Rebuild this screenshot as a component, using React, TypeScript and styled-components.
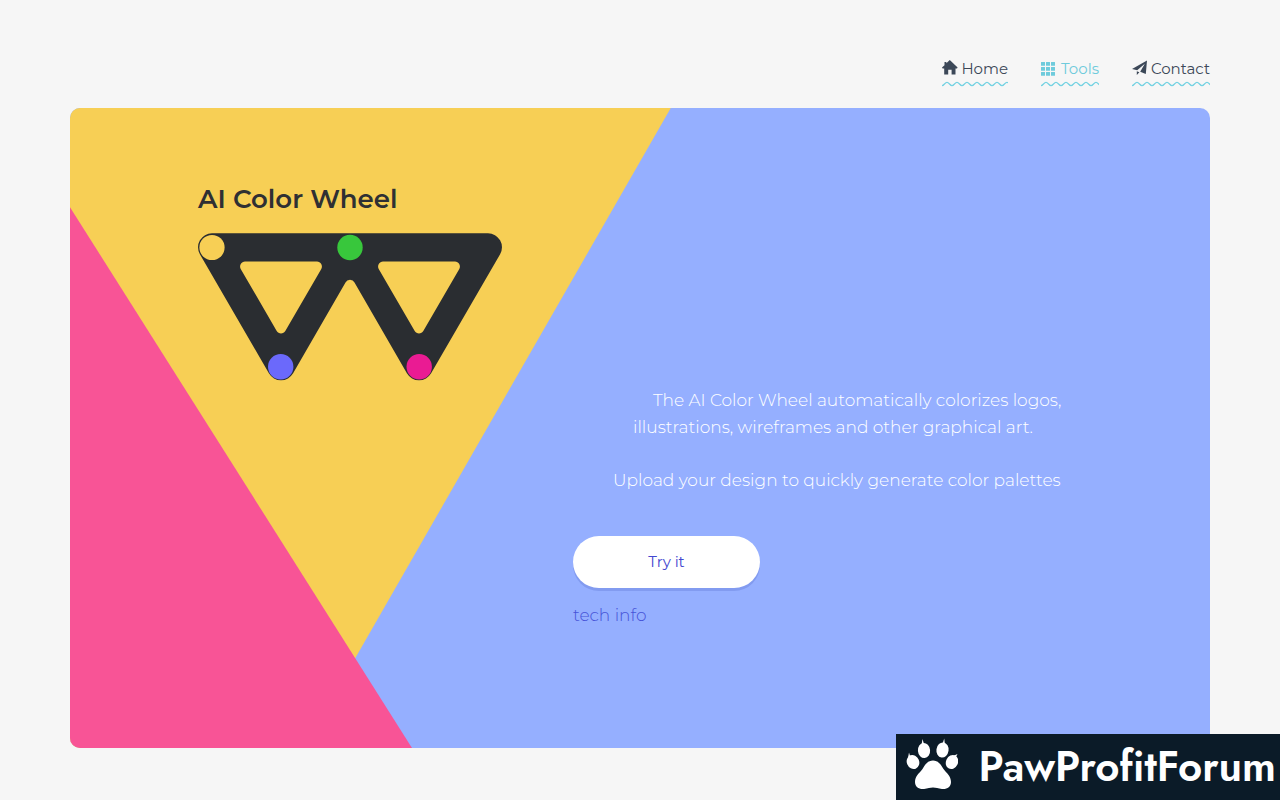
import React from "react";
import styled, { createGlobalStyle } from "styled-components";

const GlobalStyle = createGlobalStyle`
  *, *::before, *::after { box-sizing: border-box; }
  body {
    margin: 0;
    background: #f6f6f6;
    color: #2b2d33;
    font-family: Montserrat, Inter, "Liberation Sans", sans-serif;
  }
  h1, p { margin: 0; }
`;

const Page = styled.div`
  max-width: 1280px;
  margin: 0 auto;
  padding: 57px 70px 52px;
`;

const Nav = styled.nav`
  display: flex;
  justify-content: flex-end;
  gap: 33px;
  height: 51px;
`;

const NavLink = styled.a<{ $active?: boolean; $width: number }>`
  display: flex;
  flex-direction: column;
  width: ${(p) => p.$width}px;
  color: ${(p) => (p.$active ? "#6fcbdc" : "#3c4858")};
  font-size: 15px;
  line-height: 24px;
  text-decoration: none;
`;

const NavLabel = styled.span`
  display: flex;
  align-items: center;
  justify-content: space-between;
  white-space: nowrap;
`;

const NavIcon = styled.svg`
  width: 16px;
  height: 16px;
  flex: none;
  margin-bottom: 2px;
  fill: currentColor;
`;

const WaveLine = styled.svg`
  display: block;
  width: 100%;
  height: 6px;
`;

const Hero = styled.main`
  position: relative;
  display: grid;
  grid-template-columns: 503px 1fr;
  min-height: 640px;
  border-radius: 10px;
  overflow: hidden;
  background: #95afff;
`;

const YellowShape = styled.div`
  position: absolute;
  inset: 0;
  background: #f7cf55;
  clip-path: polygon(0 0, 52.7% 0, 20.5% 100%, 0 100%);
`;

const PinkShape = styled.div`
  position: absolute;
  inset: 0;
  background: #f85496;
  clip-path: polygon(0 15.5%, 30% 100%, 0 100%);
`;

const Brand = styled.section`
  position: relative;
  padding: 75px 0 0 128px;
`;

const Title = styled.h1`
  margin-bottom: 18px;
  font-size: 26px;
  font-weight: 600;
  line-height: 32px;
  color: #2f3033;
  white-space: nowrap;
`;

const WheelLogo = styled.svg`
  display: block;
  width: 304px;
  height: 148px;
`;

const Intro = styled.section`
  position: relative;
  display: flex;
  flex-direction: column;
  align-items: flex-start;
  padding-top: 279px;
`;

const Paragraph = styled.p`
  margin-bottom: 26px;
  color: #ffffff;
  font-size: 17px;
  font-weight: 300;
  line-height: 27px;
`;

const Line = styled.span<{ $indent: number }>`
  display: block;
  padding-left: ${(p) => p.$indent}px;
  white-space: nowrap;
`;

const TryButton = styled.button`
  width: 187px;
  height: 52px;
  margin: 16px 0 14px;
  padding: 0 0 1px;
  border: 0;
  border-radius: 26px;
  background: #ffffff;
  box-shadow: 0 3px 0 #829bf0;
  color: #4348d0;
  font-family: inherit;
  font-size: 15px;
  cursor: pointer;
`;

const TechLink = styled.a`
  color: #4654d8;
  font-size: 17px;
  font-weight: 300;
  line-height: 27px;
  text-decoration: none;
`;

const ForumBadge = styled.a`
  position: fixed;
  right: 0;
  bottom: 0;
  display: flex;
  align-items: center;
  justify-content: space-between;
  width: 384px;
  height: 66px;
  padding: 0 4px 0 10px;
  background: #0b1b28;
  color: #ffffff;
  font-family: Jost, Lato, sans-serif;
  font-size: 42px;
  font-weight: 600;
  line-height: 64px;
  text-decoration: none;
`;

const Paw = styled.svg`
  width: 52px;
  height: 54px;
  margin-bottom: 4px;
  fill: #ffffff;
`;

function HomeIcon() {
  return (
    <NavIcon viewBox="0 0 16 16" aria-hidden="true">
      <path d="M7.8 0 L15.6 7.6 L15 8.6 H13.5 V14.5 H9.6 V9.8 H6.2 V14.5 H2.2 V8.6 H0.6 L0 7.6 L2.5 5.2 V2 H4.4 V3.3 Z" />
    </NavIcon>
  );
}

function ToolsIcon() {
  return (
    <NavIcon viewBox="0 0 16 16" aria-hidden="true">
      {[2, 7, 12].map((y) =>
        [0, 5, 10].map((x) => <rect key={`${x}-${y}`} x={x} y={y} width="4" height="3.7" rx="0.3" />)
      )}
    </NavIcon>
  );
}

function PlaneIcon() {
  return (
    <NavIcon viewBox="0 0 16 16" aria-hidden="true">
      <path d="M15 0.5 L13.8 14 L8.2 11.7 L12.8 3.8 L5.2 10.3 L0 8.9 Z M4.8 11.2 L7.4 12.2 L4.8 15 Z" />
    </NavIcon>
  );
}

function Wave({ id }: { id: string }) {
  return (
    <WaveLine aria-hidden="true">
      <defs>
        <pattern id={id} width="10" height="6" patternUnits="userSpaceOnUse">
          <path
            d="M-5 1.3 C-3 1.3 -2 4.7 0 4.7 S3 1.3 5 1.3 S8 4.7 10 4.7 S13 1.3 15 1.3"
            fill="none"
            stroke="#74d2e2"
            strokeWidth="1.2"
          />
        </pattern>
      </defs>
      <rect width="100%" height="6" fill={`url(#${id})`} />
    </WaveLine>
  );
}

const links = [
  { name: "Home", width: 66, Icon: HomeIcon, active: false },
  { name: "Tools", width: 58, Icon: ToolsIcon, active: true },
  { name: "Contact", width: 78, Icon: PlaneIcon, active: false },
];

export default function App() {
  return (
    <>
      <GlobalStyle />
      <Page>
        <Nav>
          {links.map(({ name, width, Icon, active }) => (
            <NavLink key={name} href="#" $width={width} $active={active}>
              <NavLabel>
                <Icon />
                {name}
              </NavLabel>
              <Wave id={`wave-${name}`} />
            </NavLink>
          ))}
        </Nav>
        <Hero>
          <YellowShape />
          <PinkShape />
          <Brand>
            <Title>AI Color Wheel</Title>
            <WheelLogo viewBox="0 0 304 148" role="img" aria-label="AI Color Wheel logo">
              <path
                fill="#2a2d31"
                fillRule="evenodd"
                d="M14 0.3 H290 A14 14 0 0 1 302.1 21.3 L233.1 140.3 A14 14 0 0 1 208.9 140.3 L156.5 49.6 A5 5 0 0 0 147.5 49.6 L95.1 140.3 A14 14 0 0 1 70.9 140.3 L1.9 21.3 A14 14 0 0 1 14 0.3 Z
                M47 28.5 H119 A5 5 0 0 1 123.3 35.9 L87.3 98 A5 5 0 0 1 78.7 98 L42.7 35.9 A5 5 0 0 1 47 28.5 Z
                M185 28.5 H257 A5 5 0 0 1 261.3 35.9 L225.3 98 A5 5 0 0 1 216.7 98 L180.7 35.9 A5 5 0 0 1 185 28.5 Z"
              />
              <circle cx="14" cy="14.5" r="12.6" fill="#f7cf55" />
              <circle cx="152" cy="14.5" r="12.7" fill="#38c73c" />
              <circle cx="82.7" cy="133.7" r="12.7" fill="#6b69fb" />
              <circle cx="221.2" cy="133.7" r="12.7" fill="#ea1b93" />
            </WheelLogo>
          </Brand>
          <Intro>
            <Paragraph>
              <Line $indent={80}>The AI Color Wheel automatically colorizes logos,</Line>
              <Line $indent={60}>illustrations, wireframes and other graphical art.</Line>
            </Paragraph>
            <Paragraph>
              <Line $indent={40}>Upload your design to quickly generate color palettes</Line>
            </Paragraph>
            <TryButton type="button">Try it</TryButton>
            <TechLink href="#">tech info</TechLink>
          </Intro>
        </Hero>
      </Page>
      <ForumBadge href="#">
        <Paw viewBox="0 0 52 54" aria-hidden="true">
          <ellipse cx="7" cy="24" rx="6.2" ry="7.2" transform="rotate(-22 7 24)" />
          <ellipse cx="18" cy="12.5" rx="6.1" ry="7.6" transform="rotate(-5 18 12.5)" />
          <ellipse cx="36.5" cy="12" rx="6.1" ry="7.6" transform="rotate(8 36.5 12)" />
          <ellipse cx="46" cy="24" rx="6" ry="7.3" transform="rotate(25 46 24)" />
          <path d="M2 20 L3 14.5 L4.2 18.5 Z M15.5 7 L16.5 1 L18 6 Z M36.5 6 L38.2 0.5 L39 7 Z M47 18 L51.5 16 L49.5 20 Z" />
          <path d="M27 22.5 C32 22.5 34.5 26 37.5 31 C40.5 35 45 38 45 44 C45 49 41 51.5 36 51 C32 50.5 30 49.5 27 49.5 C24 49.5 22 50.5 18 51 C13 51.5 9 49 9 44 C9 38 13.5 35 16.5 31 C19.5 26 22 22.5 27 22.5 Z" />
        </Paw>
        PawProfitForum
      </ForumBadge>
    </>
  );
}
